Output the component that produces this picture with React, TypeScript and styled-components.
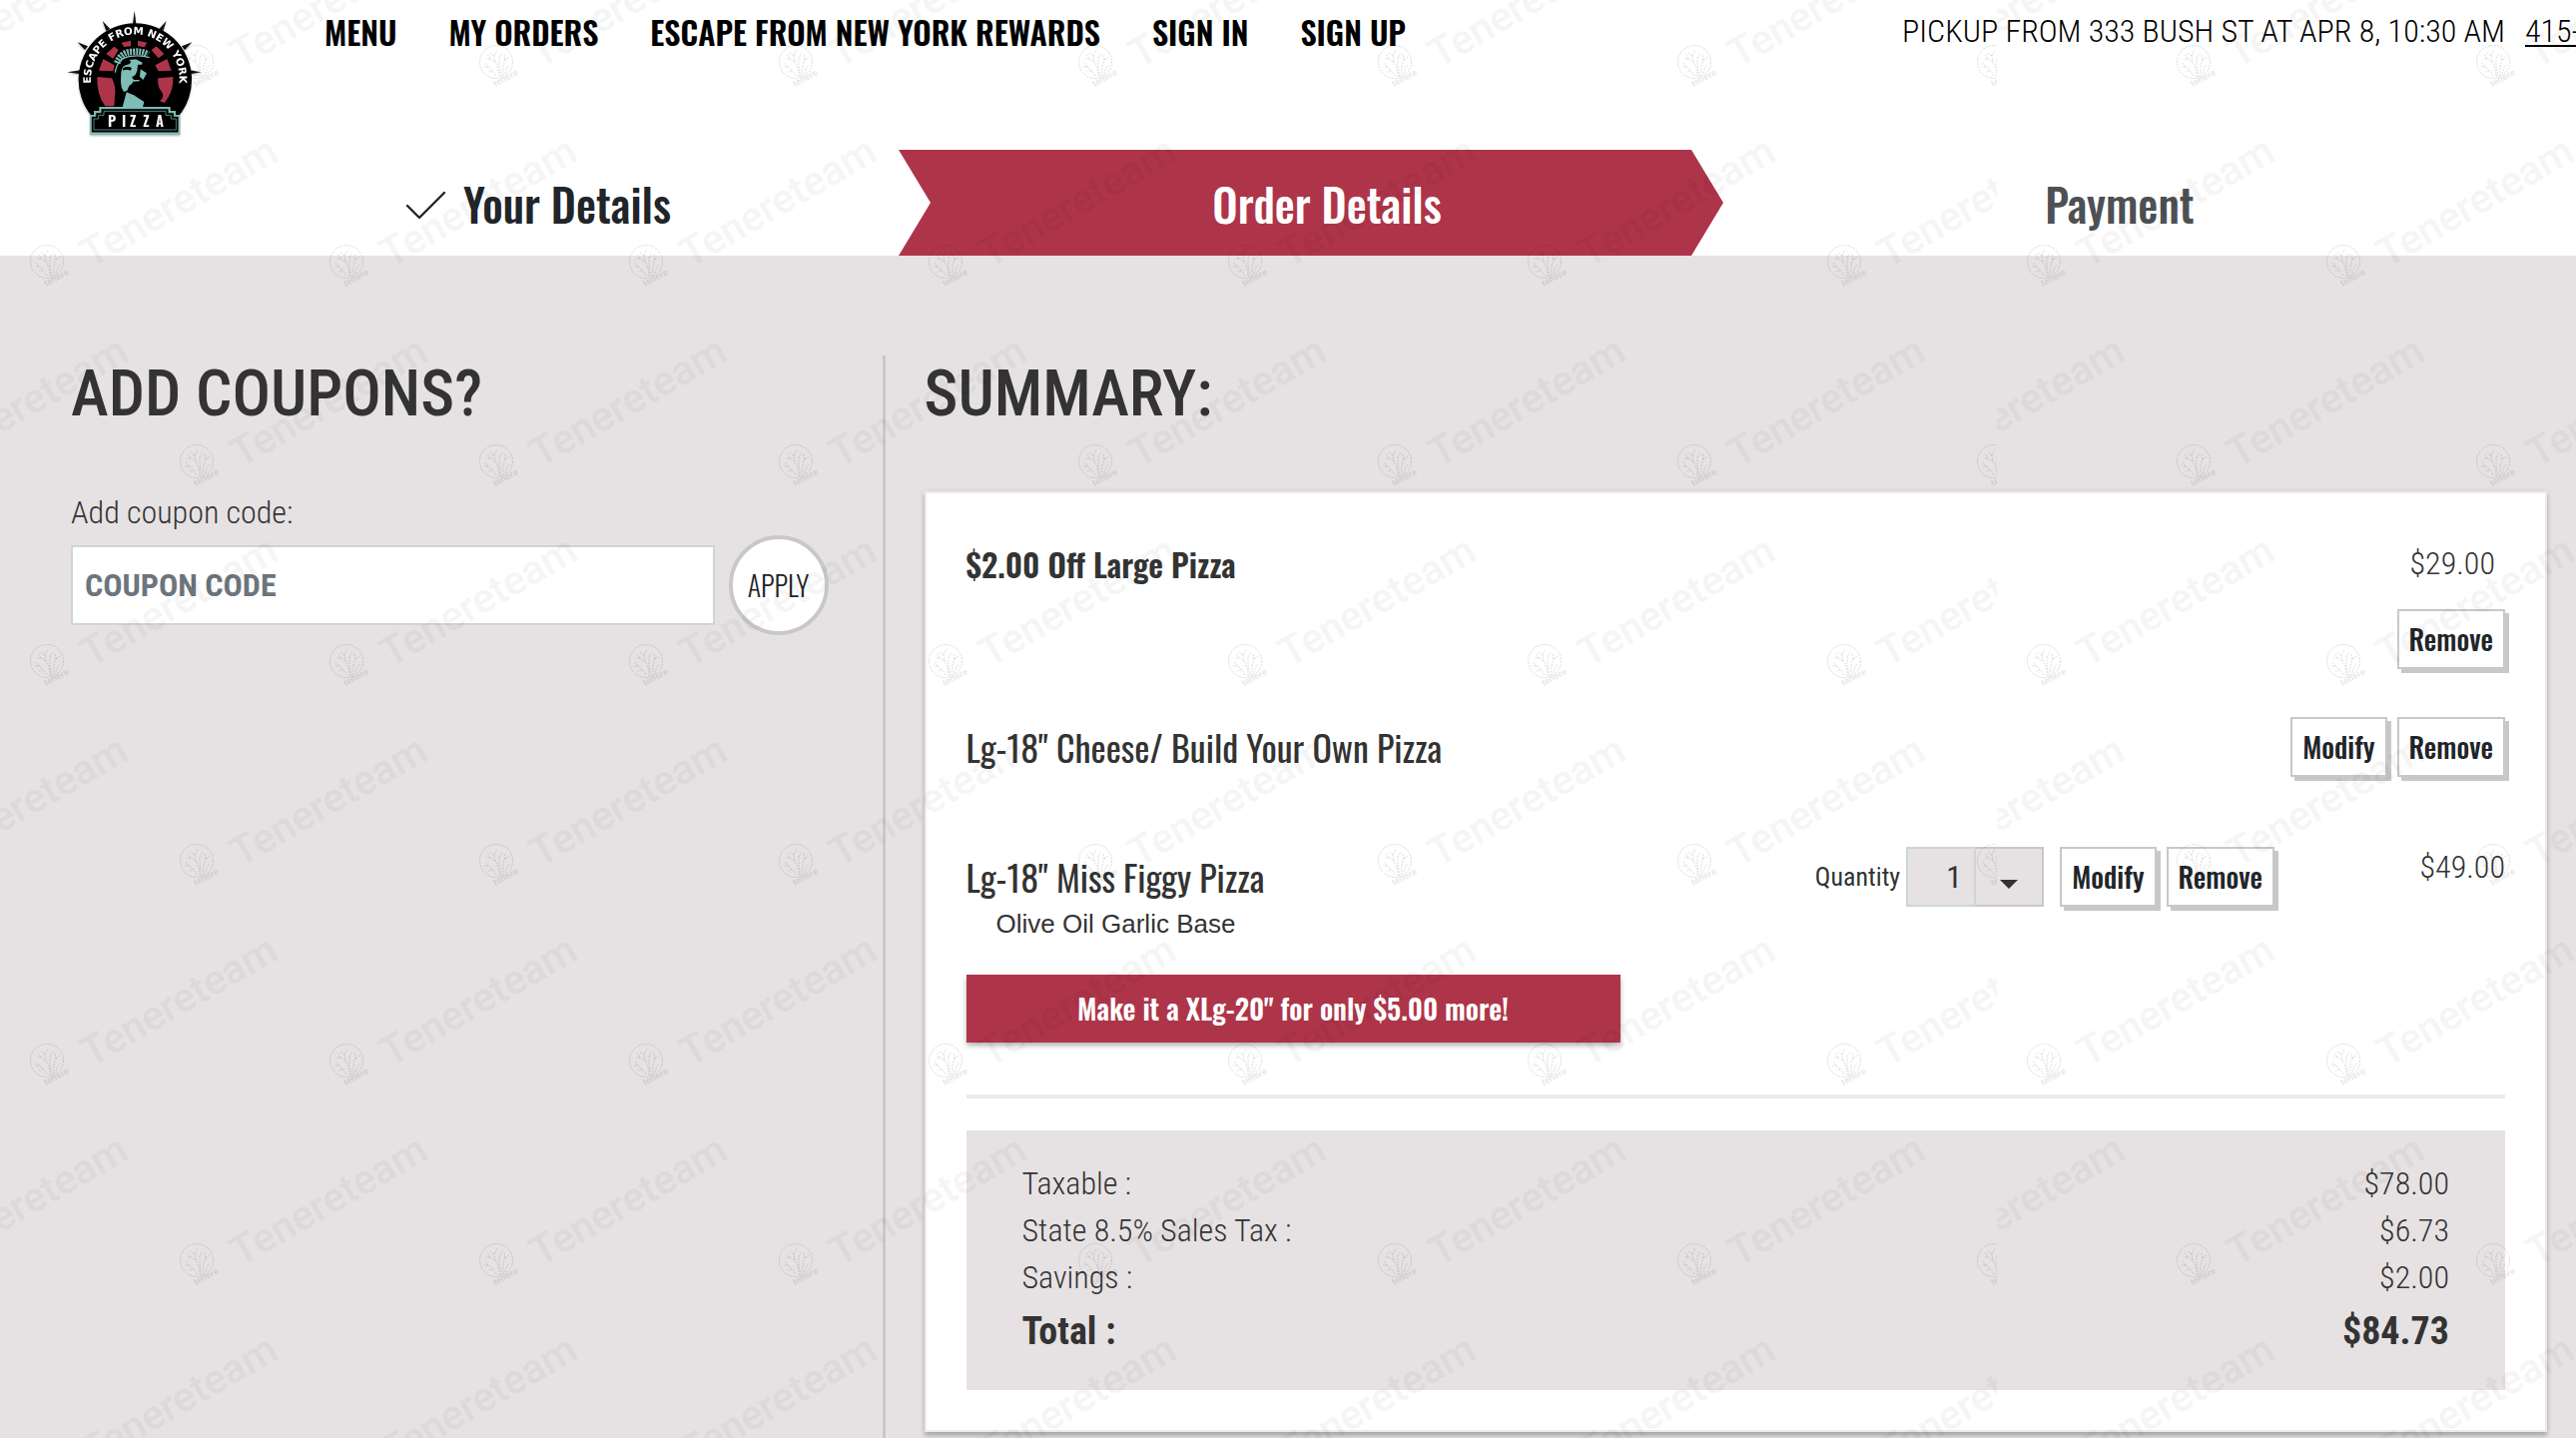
import React from 'react';
import styled, { createGlobalStyle } from 'styled-components';

const color = {
  brand: '#ae3549',
  canvas: '#e6e2e3',
  ink: '#333333',
  inkDark: '#212529',
  line: '#c8c8c8',
  lineSoft: '#ebebeb',
  field: '#ced4da',
  hint: '#6c757d',
  teal: '#7fbdb7',
};

const display = `'Oswald', 'Roboto Condensed', sans-serif`;
const body = `'Roboto Condensed', 'Roboto', sans-serif`;
const plain = `'Liberation Sans', Arial, sans-serif`;

const GlobalStyle = createGlobalStyle`
  *, *::before, *::after { box-sizing: border-box; }
  body {
    margin: 0;
    background: ${color.canvas};
    color: ${color.ink};
    font-family: ${body};
    font-size: 32px;
    font-weight: 300;
  }
`;

const Page = styled.div`
  display: flex;
  flex-direction: column;
  min-height: 100vh;
`;

/* ---------- header ---------- */

const Header = styled.header`
  display: flex;
  align-items: flex-start;
  height: 150px;
  padding: 8px 0 0 67px;
  background: #fff;
  overflow: hidden;
`;

const LogoLink = styled.a`
  display: block;
  margin: 2px 123px 0 0;
`;

const Nav = styled.nav`
  display: flex;
  flex: 1;
  gap: 52px;
`;

const NavLink = styled.a`
  color: #000;
  font: 600 32px/48px ${display};
  text-decoration: none;
  white-space: nowrap;
`;

const Pickup = styled.div`
  display: flex;
  flex: 0 0 675px;
  gap: 20px;
  min-width: 0;
  color: #000;
  line-height: 46px;
  white-space: nowrap;
`;

const PhoneLink = styled.a`
  color: inherit;
  text-underline-offset: 3px;
  text-decoration-thickness: 2px;
`;

/* ---------- steps ---------- */

const Steps = styled.ol`
  display: grid;
  grid-template-columns: repeat(3, 1fr);
  margin: 0;
  padding: 0 60px 0 138px;
  background: #fff;
  list-style: none;
`;

const Step = styled.li<{ $tone: string }>`
  display: flex;
  align-items: center;
  justify-content: center;
  gap: 16px;
  height: 106px;
  padding-top: 2px;
  color: ${(p) => p.$tone};
  font: 500 45px/68px ${display};
`;

const CurrentStep = styled(Step)`
  margin-left: -32px;
  padding-left: 32px;
  background: ${color.brand};
  clip-path: polygon(0 0, calc(100% - 32px) 0, 100% 50%, calc(100% - 32px) 100%, 0 100%, 32px 50%);
`;

/* ---------- main columns ---------- */

const Main = styled.main`
  display: grid;
  flex: 1;
  grid-template-columns: 49fr 100fr;
  padding: 100px 29px 0 71px;
`;

const CouponColumn = styled.section`
  padding-right: 54px;
  border-right: 3px solid ${color.line};
`;

const SummaryColumn = styled.section`
  padding-left: 39px;
`;

const Title = styled.h2`
  margin: 0;
  font: 500 64px/78px ${body};
`;

const CouponForm = styled.form`
  margin-top: 63px;
`;

const CouponLabel = styled.label`
  display: block;
  line-height: 32px;
`;

const CouponRow = styled.div`
  display: flex;
  align-items: center;
  gap: 14px;
  margin-top: 7px;
`;

const CouponInput = styled.input`
  flex: 1;
  min-width: 0;
  height: 80px;
  padding: 0 12px;
  border: 2px solid ${color.field};
  border-radius: 0;
  background: #fff;
  color: ${color.ink};
  font: 700 32px/48px ${body};
  &::placeholder { color: ${color.hint}; opacity: 1; }
`;

const ApplyButton = styled.button`
  flex: none;
  width: 100px;
  height: 100px;
  padding: 0;
  border: 4px solid ${color.line};
  border-radius: 50%;
  background: #fff;
  color: ${color.inkDark};
  font: 300 28px/42px ${display};
`;

/* ---------- summary card ---------- */

const Card = styled.div`
  margin-top: 58px;
  padding: 46px 40px 40px;
  border: 2px solid ${color.lineSoft};
  background: #fff;
  box-shadow: 0 4px 4px rgba(0, 0, 0, 0.2), 0 1px 6px rgba(0, 0, 0, 0.12);
`;

const CouponLine = styled.div`
  display: flex;
  justify-content: space-between;
`;

const CouponName = styled.h3`
  margin: 0;
  font: 600 32px/50px ${display};
`;

const CouponSide = styled.div`
  display: flex;
  flex-direction: column;
  align-items: flex-end;
  gap: 22px;
`;

const CouponPrice = styled.span`
  padding-right: 10px;
  line-height: 48px;
`;

const ItemLine = styled.div<{ $space: number }>`
  display: flex;
  margin-top: ${(p) => p.$space}px;
`;

const ItemName = styled.h3`
  flex: 1;
  margin: 0;
  font: 400 36px/60px ${display};
`;

const Controls = styled.div`
  display: flex;
  align-items: center;
  gap: 10px;
`;

const SmallButton = styled.button`
  height: 60px;
  padding: 0 10px;
  border: 2px solid ${color.line};
  background: #fff;
  box-shadow: 4px 4px 0 ${color.line};
  color: ${color.inkDark};
  font: 500 28px/42px ${display};
`;

const Quantity = styled.div`
  display: flex;
  align-items: center;
  gap: 6px;
  margin-right: 6px;
`;

const QuantityLabel = styled.label`
  font-size: 26px;
  font-weight: 400;
  line-height: 40px;
`;

const SelectBox = styled.div`
  display: grid;
  grid-template-columns: 70px 68px;
  height: 60px;
`;

const QuantitySelect = styled.select`
  grid-area: 1 / 1 / 2 / 3;
  padding: 0 0 0 38px;
  border: 2px solid ${color.line};
  border-radius: 0;
  background: ${color.canvas};
  color: ${color.ink};
  font: 400 32px/48px ${body};
  appearance: none;
`;

const SelectFrame = styled.span`
  grid-area: 1 / 1 / 2 / 2;
  z-index: 1;
  border: 2px solid ${color.field};
  pointer-events: none;
`;

const Caret = styled.svg`
  grid-area: 1 / 2 / 2 / 3;
  z-index: 1;
  align-self: center;
  justify-self: center;
  margin: 14px 2px 0 0;
  pointer-events: none;
`;

const ItemPrice = styled.span`
  width: 231px;
  line-height: 40px;
  text-align: right;
`;

const Topping = styled.p`
  margin: 0;
  padding-left: 30px;
  font: 400 26px/34px ${plain};
`;

const UpgradeButton = styled.button`
  display: block;
  width: 655px;
  height: 68px;
  margin-top: 34px;
  border: 0;
  background: ${color.brand};
  box-shadow: 0 3px 5px rgba(0, 0, 0, 0.3);
  color: #fff;
  font: 600 28px/42px ${display};
`;

const Divider = styled.hr`
  height: 4px;
  margin: 52px 0 32px;
  border: 0;
  background: ${color.lineSoft};
`;

const TotalsBox = styled.div`
  padding: 30px 56px 29px;
  background: ${color.canvas};
`;

const TotalsTable = styled.table`
  width: 100%;
  border-collapse: collapse;
`;

const TotalRow = styled.tr<{ $strong?: boolean }>`
  height: ${(p) => (p.$strong ? 60 : 47)}px;
  font-size: ${(p) => (p.$strong ? 38 : 32)}px;
  font-weight: ${(p) => (p.$strong ? 700 : 300)};
  line-height: 47px;
  th, td { padding: 0; font-weight: inherit; text-align: left; }
  td { text-align: right; }
`;

/* ---------- watermark ---------- */

const WatermarkLayer = styled.div`
  position: fixed;
  inset: 0;
  z-index: 10;
  display: flex;
  overflow: hidden;
  pointer-events: none;
`;

const WatermarkSheet = styled.svg`
  flex: none;
  width: 2000px;
  height: 100%;
`;

function Stamp({ x, y }: { x: number; y: number }) {
  return (
    <g transform={`translate(${x} ${y})`}>
      <g fill="none" stroke="#000" strokeOpacity="0.12" strokeWidth="1">
        <circle r="16.5" strokeDasharray="2 1" />
        <path
          strokeDasharray="2 1"
          d="M3 15 Q3 6 -1 0 L-2 -6 M7 14 Q6 4 9 -2 M5 15 L3 4 L3 -4 M9 12 Q10 6 13 3 M0 14 Q-3 8 -8 5 L-12 5 M-2 -6 L-6 -9 M-2 -6 L1 -12 M3 -4 L6 -9 M9 -2 L8 -8 M9 -2 L13 -5 M-1 0 L-6 -3 L-10 -3 M-8 5 L-11 1 M-4 9 L-8 10 M-6 -3 L-9 -8"
        />
      </g>
      <text
        transform="translate(-1 25) rotate(-28)"
        fontFamily="Liberation Sans, sans-serif"
        fontWeight="700"
        fontSize="9"
        fill="#000"
        fillOpacity="0.1"
      >
        tenere
      </text>
      <text
        transform="translate(44 7) rotate(-30)"
        fontFamily="Roboto, sans-serif"
        fontWeight="500"
        fontSize="41"
        fill="#000"
        fillOpacity="0.04"
      >
        Tenereteam
      </text>
    </g>
  );
}

function Watermark() {
  return (
    <WatermarkLayer aria-hidden="true">
      {['a', 'b'].map((id) => (
        <WatermarkSheet key={id}>
          <defs>
            <pattern id={`stamp-${id}`} width="300" height="400" patternUnits="userSpaceOnUse">
              <Stamp x={47} y={262} />
              <Stamp x={197} y={62} />
              <Stamp x={-103} y={62} />
              <Stamp x={197} y={462} />
              <Stamp x={-103} y={462} />
            </pattern>
          </defs>
          <rect width="100%" height="100%" fill={`url(#stamp-${id})`} />
        </WatermarkSheet>
      ))}
    </WatermarkLayer>
  );
}

/* ---------- drawings ---------- */

const LogoArt = styled.svg`
  display: block;
  overflow: visible;
  filter: drop-shadow(0 1px 1px rgba(110, 80, 50, 0.45));
`;

function Logo() {
  return (
    <LogoArt width="135" height="128" viewBox="51 30 405 384" role="img" aria-label="Escape from New York Pizza">
      <path
        fill="#111"
        d="M254 32 L249 72 H259 Z M158 63 L169 93 L181 87 Z M350 63 L328 87 L340 93 Z M83 127 L105 150 L114 139 Z M427 127 L396 139 L405 150 Z M52 217 L92 211 V223 Z M454 217 L420 211 V223 Z"
      />
      <path fill="#000" d="M125 348 A170 170 0 1 1 387 348 Z" />
      <g fill={color.brand}>
        <path d="M215 128 L243 122 V139 L222 141 Z M264 122 L292 128 L284 142 L264 138 Z" />
        <path d="M169 162 L193 140 L206 150 L190 176 Z M305 150 L320 139 L343 162 L326 175 Z" />
        <path d="M147 212 L160 177 L194 196 L190 214 Z M365 212 L352 177 L316 196 L326 214 Z" />
        <path d="M142 231 L186 235 Q200 262 195 288 L193 319 H166 Q140 284 142 231 Z" />
        <path d="M325 235 L370 231 Q372 276 344 309 L330 304 Q346 290 336 276 Q322 262 325 235 Z" />
      </g>
      <g fill="none" stroke={color.teal}>
        <path strokeWidth="20" strokeDasharray="6 3" d="M202 190 Q213 156 248 156 Q276 152 294 164" />
        <path strokeWidth="4" d="M196 218 Q202 176 238 170 Q272 164 299 173" />
      </g>
      <path
        fill={color.teal}
        d="M214 218 Q214 196 238 193 L244 186 L238 180 L258 178 L278 188 L276 194 L264 194 L262 214 L256 226 L246 232 L252 240 L270 240 L268 244 L250 245 L246 252 L238 258 L232 272 L222 276 Q212 262 213 240 Z"
      />
      <path fill="#000" d="M218 206 Q230 196 246 204 L242 212 Q230 206 220 212 Z" />
      <path fill={color.teal} d="M272 208 L291 220 L280 240 L270 230 Z" />
      <path fill={color.teal} d="M230 277 L252 286 L283 306 L279 322 H218 Z" />
      <path
        fill={color.teal}
        d="M120 345 H132 V333 H148 V321 H362 V333 H378 V345 H391 V405 H120 Z"
      />
      <path
        fill="#000"
        stroke="#000"
        d="M126 351 H139 V340 H155 V328 H355 V340 H371 V351 H385 V397 H126 Z"
      />
      <path
        fill="none"
        stroke={color.teal}
        strokeWidth="2"
        d="M132 357 H146 V346 H162 V334 H348 V346 H364 V357 H379 V390 H132 Z"
      />
      <text
        x="174 216 240 280 318"
        y="382"
        fontFamily="Oswald, sans-serif"
        fontWeight="600"
        fontSize="44"
        fill="#fff"
      >
        PIZZA
      </text>
      <path id="logo-arc" fill="none" d="M130 279 A133 133 0 1 1 382 279" />
      <text fontFamily="DejaVu Sans, sans-serif" fontWeight="700" fontSize="31" fill="#fff" textAnchor="middle">
        <textPath href="#logo-arc" startOffset="50%">
          ESCAPE FROM NEW YORK
        </textPath>
      </text>
    </LogoArt>
  );
}

function CheckMark() {
  return (
    <svg width="50" height="32" viewBox="0 0 50 32" aria-hidden="true">
      <path
        d="M10 18 L22 30 L47 5"
        fill="none"
        stroke={color.inkDark}
        strokeWidth="2.4"
        strokeLinecap="round"
        strokeLinejoin="round"
      />
    </svg>
  );
}

const links = ['MENU', 'MY ORDERS', 'ESCAPE FROM NEW YORK REWARDS', 'SIGN IN', 'SIGN UP'];

const totals = [
  { label: 'Taxable :', amount: '$78.00' },
  { label: 'State 8.5% Sales Tax :', amount: '$6.73' },
  { label: 'Savings :', amount: '$2.00' },
  { label: 'Total :', amount: '$84.73', strong: true },
];

export default function App() {
  return (
    <Page>
      <GlobalStyle />
      <Header>
        <LogoLink href="#">
          <Logo />
        </LogoLink>
        <Nav>
          {links.map((text) => (
            <NavLink key={text} href="#">
              {text}
            </NavLink>
          ))}
        </Nav>
        <Pickup>
          <span>PICKUP FROM 333 BUSH ST AT APR 8, 10:30 AM</span>
          <PhoneLink href="#">415-</PhoneLink>
        </Pickup>
      </Header>

      <Steps>
        <Step $tone={color.inkDark}>
          <CheckMark />
          <span>Your Details</span>
        </Step>
        <CurrentStep $tone="#ffffff" aria-current="step">
          Order Details
        </CurrentStep>
        <Step $tone="#4d5154">Payment</Step>
      </Steps>

      <Main>
        <CouponColumn>
          <Title>ADD COUPONS?</Title>
          <CouponForm onSubmit={(e) => e.preventDefault()}>
            <CouponLabel htmlFor="coupon">Add coupon code:</CouponLabel>
            <CouponRow>
              <CouponInput id="coupon" type="text" placeholder="COUPON CODE" />
              <ApplyButton type="submit">APPLY</ApplyButton>
            </CouponRow>
          </CouponForm>
        </CouponColumn>

        <SummaryColumn>
          <Title>SUMMARY:</Title>
          <Card>
            <CouponLine>
              <CouponName>$2.00 Off Large Pizza</CouponName>
              <CouponSide>
                <CouponPrice>$29.00</CouponPrice>
                <SmallButton type="button">Remove</SmallButton>
              </CouponSide>
            </CouponLine>

            <ItemLine $space={48}>
              <ItemName>Lg-18" Cheese/ Build Your Own Pizza</ItemName>
              <Controls>
                <SmallButton type="button">Modify</SmallButton>
                <SmallButton type="button">Remove</SmallButton>
              </Controls>
            </ItemLine>

            <ItemLine $space={70}>
              <ItemName>Lg-18" Miss Figgy Pizza</ItemName>
              <Controls>
                <Quantity>
                  <QuantityLabel htmlFor="quantity">Quantity</QuantityLabel>
                  <SelectBox>
                    <QuantitySelect id="quantity" defaultValue="1">
                      <option>1</option>
                      <option>2</option>
                      <option>3</option>
                    </QuantitySelect>
                    <SelectFrame />
                    <Caret width="18" height="9" viewBox="0 0 18 9" aria-hidden="true">
                      <path d="M0 0 H18 L9 9 Z" fill={color.ink} />
                    </Caret>
                  </SelectBox>
                </Quantity>
                <SmallButton type="button">Modify</SmallButton>
                <SmallButton type="button">Remove</SmallButton>
              </Controls>
              <ItemPrice>$49.00</ItemPrice>
            </ItemLine>
            <Topping>Olive Oil Garlic Base</Topping>
            <UpgradeButton type="button">Make it a XLg-20" for only $5.00 more!</UpgradeButton>

            <Divider />

            <TotalsBox>
              <TotalsTable>
                <tbody>
                  {totals.map((row) => (
                    <TotalRow key={row.label} $strong={row.strong}>
                      <th scope="row">{row.label}</th>
                      <td>{row.amount}</td>
                    </TotalRow>
                  ))}
                </tbody>
              </TotalsTable>
            </TotalsBox>
          </Card>
        </SummaryColumn>
      </Main>
      <Watermark />
    </Page>
  );
}
